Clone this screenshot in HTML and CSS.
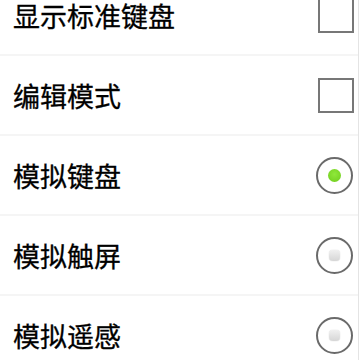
FILE: index.html
```html
<!DOCTYPE html>
<html lang="zh-CN">
<head>
  <meta charset="UTF-8">
  <title>设置</title>
  <link rel="stylesheet" href="styles.css">
</head>
<body>

  <div class="settings">
    <div class="row">
      <span class="label">显示标准键盘</span>
      <span class="check"></span>
    </div>
    <div class="row">
      <span class="label">编辑模式</span>
      <span class="check"></span>
    </div>
    <div class="row">
      <span class="label">模拟键盘</span>
      <span class="radio on"><span class="dot"></span></span>
    </div>
    <div class="row">
      <span class="label">模拟触屏</span>
      <span class="radio"><span class="dot"></span></span>
    </div>
    <div class="row">
      <span class="label">模拟遥感</span>
      <span class="radio"><span class="dot"></span></span>
    </div>
  </div>

</body>
</html>
```

FILE: styles.css
```css
html, body {
  margin: 0;
  padding: 0;
  background: #fff;
  overflow: hidden;
}

body {
  font-family: "Noto Sans CJK SC", "Noto Sans", sans-serif;
  width: 360px;
  height: 360px;
}

.settings {
  width: 358px;
  border-right: 1px solid #e4e4e4;
  margin-top: -24px;
}

.row {
  display: flex;
  align-items: center;
  justify-content: space-between;
  height: 78px;
  border-bottom: 2px solid #f5f5f5;
  padding: 0 4px 0 13px;
}

.label {
  font-size: 27px;
  color: #000;
  line-height: 1;
  -webkit-text-stroke: 0.3px #000;
}

.check {
  width: 32px;
  height: 31px;
  border: 2px solid #777;
  background: #fff;
}

.radio {
  width: 33px;
  height: 33px;
  border: 2px solid #6a6a6a;
  border-radius: 50%;
  display: flex;
  align-items: center;
  justify-content: center;
  margin-right: 1px;
}

.dot {
  width: 11px;
  height: 11px;
  border-radius: 4px;
  background: linear-gradient(#f0f0f0, #d6d6d6);
  box-shadow: 0 0 1px #bbb;
}

.radio.on .dot {
  width: 13px;
  height: 13px;
  border-radius: 50%;
  background: radial-gradient(circle at 50% 40%, #8fe83a, #6fcc1c);
  box-shadow: none;
}
```
